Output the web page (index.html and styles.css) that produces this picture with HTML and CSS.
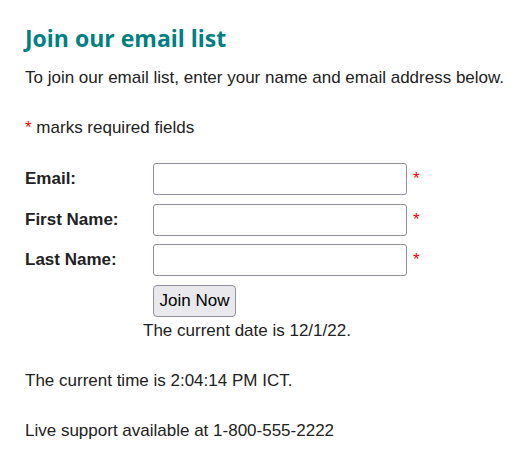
FILE: index.html
```html
<!DOCTYPE html>
<html>
<head>
<meta charset="utf-8">
<title>Join our email list</title>
<link rel="stylesheet" href="styles.css">
</head>
<body>
<h1 class="title">Join our email list</h1>
<p class="intro">To join our email list, enter your name and email address below.</p>
<p class="note"><span class="req">*</span> marks required fields</p>
<form class="signup">
  <div class="row">
    <label class="lbl" for="email">Email:</label>
    <input class="field" id="email" type="text">
    <span class="req">*</span>
  </div>
  <div class="row">
    <label class="lbl" for="first">First Name:</label>
    <input class="field" id="first" type="text">
    <span class="req">*</span>
  </div>
  <div class="row">
    <label class="lbl" for="last">Last Name:</label>
    <input class="field" id="last" type="text">
    <span class="req">*</span>
  </div>
  <div class="actions">
    <button class="btn" type="button">Join Now</button>
  </div>
</form>
<p class="date">The current date is 12/1/22.</p>
<p class="line">The current time is 2:04:14 PM ICT.</p>
<p class="line">Live support available at 1-800-555-2222</p>
</body>
</html>
```
FILE: styles.css
```css
html, body {
  margin: 0;
  padding: 0;
  background: #ffffff;
}
body {
  padding: 23px 25px 0 25px;
  font-family: "Liberation Sans", Arial, sans-serif;
  font-size: 17px;
  line-height: 18px;
  color: #222222;
}
.title {
  margin: 0;
  font-family: "Open Sans", Lato, sans-serif;
  font-weight: 700;
  font-size: 23px;
  line-height: 30px;
  color: #008080;
}
.intro {
  margin: 16px 0 0 0;
}
.note {
  margin: 32px 0 0 0;
}
.req {
  color: #ff0000;
}
.signup {
  margin-top: 26px;
  display: flex;
  flex-direction: column;
  gap: 8.5px;
}
.row {
  display: flex;
  align-items: center;
  height: 32px;
}
.lbl {
  width: 128px;
  font-weight: 700;
}
.field {
  box-sizing: border-box;
  width: 254px;
  height: 32px;
  margin: 0 6px 0 0;
  padding: 0 6px;
  border: 1px solid #8f8f9d;
  border-radius: 3px;
  background: #ffffff;
  font-family: "Liberation Sans", Arial, sans-serif;
  font-size: 17px;
}
.actions {
  padding-left: 128px;
}
.btn {
  box-sizing: border-box;
  height: 32px;
  width: 83px;
  padding: 0;
  border: 1px solid #8f8f9d;
  border-radius: 4px;
  background: #e9e9ed;
  color: #000000;
  font-family: "Liberation Sans", Arial, sans-serif;
  font-size: 17px;
}
.date {
  margin: 5px 0 0 118px;
}
.line {
  margin: 32px 0 0 0;
}
```
